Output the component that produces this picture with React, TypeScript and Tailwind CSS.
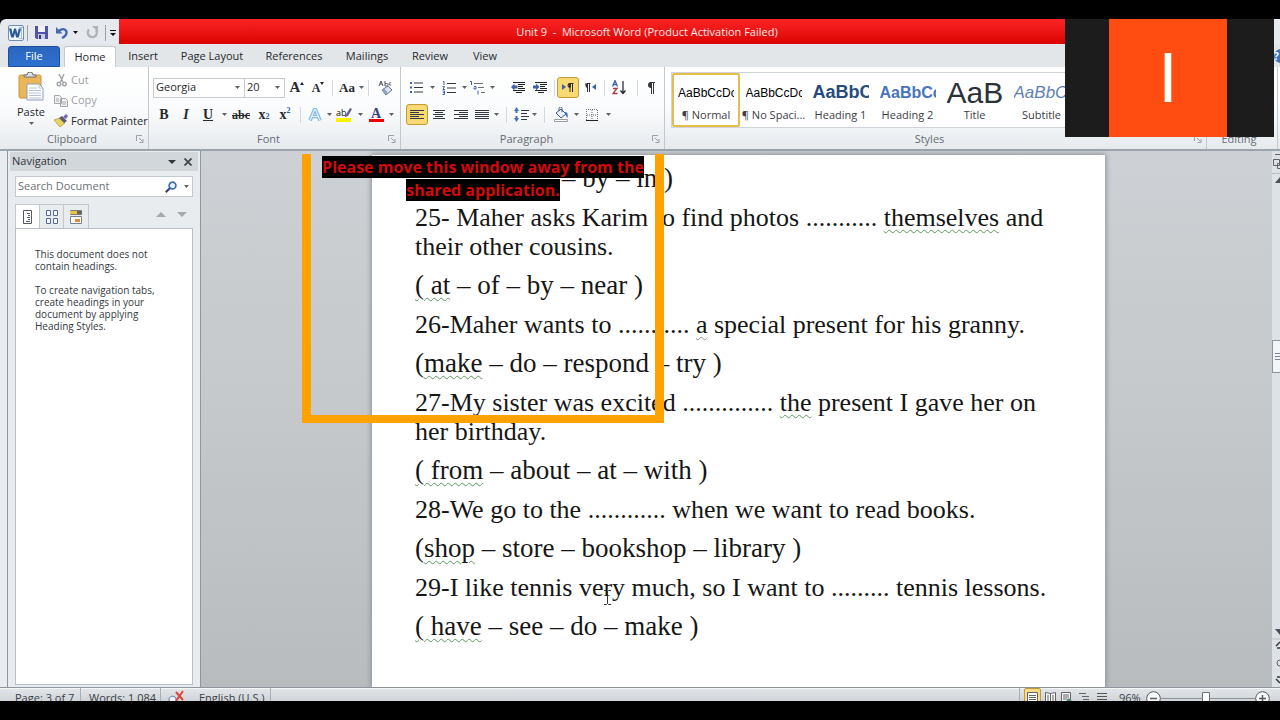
import type { ReactNode } from "react";

type Segment = string | { mark: string; grey?: boolean };

type Paragraph = { kind: "question" | "choices"; parts: Segment[] };

const paragraphs: Paragraph[] = [
  {
    kind: "question",
    parts: ["25- Maher asks Karim to find photos ........... ", { mark: "themselves" }, " and\ntheir other cousins."],
  },
  { kind: "choices", parts: [{ mark: "( at" }, " – of – by – near )"] },
  {
    kind: "question",
    parts: ["26-Maher wants to ........... ", { mark: "a", grey: true }, " special present for his granny."],
  },
  { kind: "choices", parts: ["(", { mark: "make" }, " – do – respond – try )"] },
  {
    kind: "question",
    parts: ["27-My sister was excited .............. ", { mark: "the" }, " present I gave her on\nher birthday."],
  },
  { kind: "choices", parts: [{ mark: "( from" }, " – about – at – with )"] },
  { kind: "question", parts: ["28-We go to the ............ when we want to read books."] },
  { kind: "choices", parts: ["(", { mark: "shop" }, " – store – bookshop – library )"] },
  { kind: "question", parts: ["29-I like tennis very much, so I want to ......... tennis lessons."] },
  { kind: "choices", parts: [{ mark: "( have" }, " – see – do – make )"] },
];

const tabs = [
  { name: "Insert", width: "w-[54px]" },
  { name: "Page Layout", width: "w-[84px]" },
  { name: "References", width: "w-[80px]" },
  { name: "Mailings", width: "w-[66px]" },
  { name: "Review", width: "w-[60px]" },
  { name: "View", width: "w-[50px]" },
];

const styles = [
  { name: "¶ Normal", sample: "AaBbCcDc", look: "text-[12px] text-black" },
  { name: "¶ No Spaci...", sample: "AaBbCcDc", look: "text-[12px] text-black" },
  { name: "Heading 1", sample: "AaBbC", look: "text-[18px] font-bold text-[#274b7c]" },
  { name: "Heading 2", sample: "AaBbCc", look: "text-[16px] font-bold text-[#4a73bb]" },
  { name: "Title", sample: "AaB", look: "text-[30px] text-[#2b3138]" },
  { name: "Subtitle", sample: "AaBbC", look: "text-[17px] italic text-[#5f7fb8]" },
];

function Caret({ className = "w-[10px]" }: { className?: string }) {
  return (
    <span className={`flex shrink-0 items-center justify-center ${className}`}>
      <svg width="5" height="3" viewBox="0 0 5 3" aria-hidden="true">
        <path d="M0 0h5L2.5 3z" fill="#5d6266" />
      </svg>
    </span>
  );
}

function Sep({ className = "w-[8px]" }: { className?: string }) {
  return (
    <span className={`flex shrink-0 justify-center ${className}`}>
      <span className="h-4 w-px bg-[#d5d8dc]" />
    </span>
  );
}

function Tool({
  label,
  className = "w-[22px]",
  active = false,
  children,
}: {
  label: string;
  className?: string;
  active?: boolean;
  children: ReactNode;
}) {
  return (
    <button
      type="button"
      aria-label={label}
      className={`flex h-[21px] shrink-0 items-center justify-center ${className} ${
        active ? "rounded-[3px] border border-[#c29b35] bg-[#f8d973]" : ""
      }`}
    >
      {children}
    </button>
  );
}

function Group({ title, className, launcher = true, children }: { title: string; className: string; launcher?: boolean; children: ReactNode }) {
  return (
    <section aria-label={title} className={`flex flex-col border-r border-[#c3c8ce] ${className}`}>
      <div className="flex-1">{children}</div>
      <div className="flex h-[18px] items-start">
        <span className="flex-1 text-center text-[11px] leading-4 text-[#666b71]">{title}</span>
        <span className="flex w-3 pt-1">
          {launcher && (
            <svg width="8" height="8" viewBox="0 0 8 8" fill="none" stroke="#9aa0a6" aria-hidden="true">
              <path d="M.5 6V.5H6M3 3l3.500 3.500M7 4v3.500H3.500" />
            </svg>
          )}
        </span>
      </div>
    </section>
  );
}

function Lines({ rows }: { rows: [number, number][] }) {
  return (
    <svg width="14" height="12" viewBox="0 0 14 12" stroke="#33383e" aria-hidden="true">
      {rows.map(([a, b], i) => (
        <path key={i} d={`M${a} ${i * 2 + 1.5}H${b}`} />
      ))}
    </svg>
  );
}

function IndentIcon({ flip = false }: { flip?: boolean }) {
  return (
    <svg width="15" height="13" viewBox="0 0 15 13" fill="none" aria-hidden="true">
      <path d="M2 1.500h12M7 3.500h7M7 5.500h5M7 7.500h7M2 9.500h12M5 11.500h6" stroke="#1f2327" />
      <path d={flip ? "M0 4.500h3V2.500l3.500 3.500L3 9.500v-2H0z" : "M6.500 4.500h-3v-2L0 6l3.500 3.500v-2h3z"} fill="#4360a8" />
    </svg>
  );
}

function QuickAccess() {
  return (
    <div className="flex w-[119px] items-center rounded-tl-md bg-[#e6eaee] pt-[2px] pl-2">
      <svg width="16" height="16" viewBox="0 0 16 16" aria-hidden="true">
        <rect x=".5" y=".5" width="15" height="15" rx="1.500" fill="#eef4fa" stroke="#6d8fb5" />
        <path d="M13.500 2v12M11 2.500h4M11 13.500h4" stroke="#a9c0da" />
        <path d="M1 3.500l2.200 9h2.600L7 8l1.200 4.500h2.600l2.200-9h-2.300L9.500 9 8 3.500H6L4.600 9 3.400 3.500z" fill="#2a5a9c" />
      </svg>
      <span className="ml-[3px] h-4 w-px bg-[#9aa0a7]" />
      <button type="button" aria-label="Save" className="ml-[7px]">
        <svg width="13" height="13" viewBox="0 0 13 13" aria-hidden="true">
          <path d="M0 0h13v13H1.500L0 11.500z" fill="#5153a8" />
          <path d="M3 0h7v6H3z" fill="#eef0fa" />
          <path d="M3 8h7v5H3z" fill="#c9cdea" />
          <path d="M4 9h2v4H4z" fill="#34367d" />
        </svg>
      </button>
      <button type="button" aria-label="Undo" className="ml-[8px] flex items-center">
        <svg width="12" height="13" viewBox="0 0 12 13" fill="none" aria-hidden="true">
          <path d="M3 5c4-3.500 7.500-1.500 7.500 1.500S8 11 6 12" stroke="#4667b5" strokeWidth="2.400" />
          <path d="M0 1v6.500h6.500z" fill="#4667b5" />
        </svg>
        <svg width="5" height="3" viewBox="0 0 5 3" className="ml-[5px]" aria-hidden="true">
          <path d="M0 0h5L2.500 3z" fill="#111" />
        </svg>
      </button>
      <button type="button" aria-label="Repeat" className="ml-[8px]">
        <svg width="13" height="13" viewBox="0 0 13 13" fill="none" aria-hidden="true">
          <path d="M3 3.500a4.500 4.500 0 1 0 7 .5" stroke="#b0b3b6" strokeWidth="2.400" />
          <path d="M6 0h6v6z" fill="#b0b3b6" />
        </svg>
      </button>
      <span className="ml-[6px] h-4 w-px bg-[#9aa0a7]" />
      <button type="button" aria-label="Customize Quick Access Toolbar" className="ml-[4px]">
        <svg width="6" height="6" viewBox="0 0 6 6" aria-hidden="true">
          <path d="M0 0h6v1H0zM0 3h6L3 6z" fill="#111" />
        </svg>
      </button>
    </div>
  );
}

function ClipboardGroup() {
  return (
    <Group title="Clipboard" className="w-[141px]">
      <div className="flex">
        <button type="button" className="flex w-[46px] shrink-0 flex-col items-center pt-[5px] text-[11px] leading-4">
          <svg width="26" height="29" viewBox="0 0 26 29" aria-hidden="true">
            <rect x="1" y="3" width="22" height="23" rx="1.500" fill="#eab657" stroke="#c8953a" />
            <path d="M6 5V3h3a3 3 0 0 1 6 0h3v2z" fill="#dfe1e4" stroke="#6c7177" />
            <path d="M9 12h12l4 4v12H9z" fill="#fff" stroke="#8c9db8" />
            <path d="M21 12v4h4M11 16h8M11 18.500h12M11 21h12M11 23.500h12M11 26h12" fill="none" stroke="#b3c2da" />
          </svg>
          <span className="mt-[3px]">Paste</span>
          <Caret className="h-[6px] w-[10px]" />
        </button>
        <div className="flex flex-col pt-[3px] text-[11px] whitespace-nowrap">
          <button type="button" disabled className="flex h-5 items-center pl-[2px] text-[#9c9fa3]">
            <svg width="12" height="13" viewBox="0 0 12 13" fill="none" stroke="#a4a7aa" strokeWidth="1.500" className="mr-[3px]" aria-hidden="true">
              <path d="M3 0l4 8M8 0L4.500 8" />
              <circle cx="3" cy="10" r="1.800" />
              <circle cx="8.500" cy="10" r="1.800" />
            </svg>
            Cut
          </button>
          <button type="button" disabled className="flex h-[21px] items-center text-[#9c9fa3]">
            <svg width="14" height="12" viewBox="0 0 14 12" fill="#f3f3f3" stroke="#a4a7aa" className="mr-[3px]" aria-hidden="true">
              <path d="M.5.500h5l2 2v6h-7zM6.500 3.500h5l2 2v6h-7z" />
              <path d="M2 4h3M2 6h3M8 7h4M8 9h4" />
            </svg>
            Copy
          </button>
          <button type="button" className="flex h-5 items-center">
            <svg width="15" height="14" viewBox="0 0 15 14" className="mr-[2px]" aria-hidden="true">
              <path d="M0 6l6-2 5 5-5 4z" fill="#e9d45e" stroke="#a8943d" strokeWidth=".7" />
              <path d="M5 4l3-2 5 5-3 2z" fill="#5c5a72" />
              <path d="M9 3l3-3 2 2-2 3z" fill="#776aa8" />
            </svg>
            Format Painter
          </button>
        </div>
      </div>
    </Group>
  );
}

function FontGroup() {
  return (
    <Group title="Font" className="w-[252px]">
      <div className="flex flex-col gap-[6px] pt-[10px] pl-[4px]">
        <div className="flex h-[21px] items-center">
          <div className="flex h-5 w-[92px] items-center border border-[#c8ccd1] bg-white">
            <select aria-label="Font" className="h-full w-[78px] appearance-none pl-[2px] text-[11px] outline-none">
              <option>Georgia</option>
            </select>
            <Caret />
          </div>
          <div className="flex h-5 w-[40px] items-center border border-l-0 border-[#c8ccd1] bg-white">
            <select aria-label="Font size" className="h-full w-[27px] appearance-none pl-[2px] text-[11px] outline-none">
              <option>20</option>
            </select>
            <Caret />
          </div>
          <Tool label="Grow font" className="w-[24px]">
            <span className="font-['Liberation_Serif',serif] text-[15px] font-bold">A</span>
            <svg width="4" height="3" viewBox="0 0 4 3" className="mb-2"><path d="M0 3h4L2 0z" fill="#222" /></svg>
          </Tool>
          <Tool label="Shrink font" className="w-[18px]">
            <span className="font-['Liberation_Serif',serif] text-[12px] font-bold">A</span>
            <svg width="4" height="3" viewBox="0 0 4 3" className="mb-2"><path d="M0 0h4L2 3z" fill="#222" /></svg>
          </Tool>
          <Sep className="w-[10px]" />
          <Tool label="Change case" className="w-[20px]">
            <span className="font-['Liberation_Serif',serif] text-[13px] font-bold">Aa</span>
          </Tool>
          <Caret className="w-[8px]" />
          <Sep className="w-[6px]" />
          <Tool label="Clear formatting" className="w-[28px]">
            <svg width="15" height="15" viewBox="0 0 15 15" aria-hidden="true">
              <path d="M1 6l2-5 2 5M2 4h2M7 1v5h1.500c2 0 2-2.500 0-2.500H7M13 3c-2-2-3 3 0 2" fill="none" stroke="#53575d" />
              <path d="M4 10l6-4 4 4-6 5z" fill="#dfe4f2" stroke="#66769c" />
              <path d="M4 10l3.500 4.500L10 13 6 8.600z" fill="#8e9fc8" />
            </svg>
          </Tool>
        </div>
        <div className="flex h-[21px] items-center font-['Liberation_Serif',serif] text-[14px]">
          <Tool label="Bold"><b>B</b></Tool>
          <Tool label="Italic"><i className="font-bold">I</i></Tool>
          <Tool label="Underline"><span className="font-bold underline">U</span></Tool>
          <Caret />
          <Tool label="Strikethrough" className="w-[24px]"><span className="text-[12px] font-bold line-through">abc</span></Tool>
          <Tool label="Subscript"><b>x</b><sub className="text-[8px] font-bold text-[#3558a8]">2</sub></Tool>
          <Tool label="Superscript" className="w-[20px]"><b>x</b><sup className="text-[8px] font-bold text-[#3558a8]">2</sup></Tool>
          <Sep className="w-[10px]" />
          <Tool label="Text effects" className="w-[20px]">
            <svg width="14" height="14" viewBox="0 0 14 14" fill="none" aria-hidden="true">
              <path d="M2 12.500L6.500 1.500h1L12 12.500M4 8.500h6" stroke="#86bce4" strokeWidth="3.600" />
              <path d="M2 12.500L6.500 1.500h1L12 12.500M4 8.500h6" stroke="#e6f3fd" strokeWidth="1.200" />
            </svg>
          </Tool>
          <Caret className="w-[8px]" />
          <Tool label="Text highlight color">
            <svg width="16" height="15" viewBox="0 0 16 15" aria-hidden="true">
              <text x="0" y="9" fontSize="9" fontFamily="Open Sans, sans-serif" fill="#111">ab</text>
              <path d="M9 9l5-8 2 1-4 7-3 1z" fill="#66628f" />
              <path d="M0 11h15v4H0z" fill="#fff200" />
            </svg>
          </Tool>
          <Caret />
          <Tool label="Font color" className="w-[22px]">
            <span className="flex flex-col items-center">
              <span className="h-[12px] text-[14px] leading-[13px] font-bold text-[#38407e]">A</span>
              <span className="h-[3px] w-[15px] bg-[#f00000]" />
            </span>
          </Tool>
          <Caret className="w-[8px]" />
        </div>
      </div>
    </Group>
  );
}

function ParagraphGroup() {
  return (
    <Group title="Paragraph" className="w-[264px]">
      <div className="flex flex-col gap-[6px] pt-[10px] pl-[5px]">
        <div className="flex h-[21px] items-center">
          <Tool label="Bullets" className="w-[20px]">
            <svg width="13" height="13" viewBox="0 0 13 13" aria-hidden="true">
              <path d="M0 1h2v2H0zM0 5.500h2v2H0zM0 10h2v2H0z" fill="#3f5fae" />
              <path d="M4 2h9M4 6.500h9M4 11h9" stroke="#33383e" />
            </svg>
          </Tool>
          <Caret className="w-[12px]" />
          <Tool label="Numbering">
            <svg width="14" height="14" viewBox="0 0 14 14" fill="none" aria-hidden="true">
              <path d="M1 .500h1V4M.5 5.500h2L1 8.500h2M.5 10h2v3.500h-2M1 11.700h1.500" stroke="#3f5fae" />
              <path d="M5 2.500h9M5 7h9M5 11.500h9" stroke="#33383e" />
            </svg>
          </Tool>
          <Caret className="w-[8px]" />
          <Tool label="Multilevel list" className="w-[20px]">
            <svg width="16" height="14" viewBox="0 0 16 14" fill="none" aria-hidden="true">
              <path d="M0 .500h1.500V4M4 5.500h2V8H4V6.500M8 9.500v4" stroke="#3f5fae" />
              <path d="M4 2.500h9M8 6.500h6M11 11.500h4" stroke="#6b7077" />
            </svg>
          </Tool>
          <Caret className="w-[8px]" />
          <span className="w-[11px]" />
          <Tool label="Decrease indent"><IndentIcon /></Tool>
          <Tool label="Increase indent"><IndentIcon flip /></Tool>
          <Sep className="w-[6px]" />
          <Tool label="Left-to-right text direction" active>
            <svg width="12" height="9" viewBox="0 0 12 9" aria-hidden="true">
              <path d="M0 1l4 3-4 3z" fill="#3f5fae" />
              <path d="M11.500.500H8a2 2 0 0 0 0 4V9M10.500.500V9" fill="none" stroke="#2b2f35" />
              <path d="M6 .500h3v4H7z" fill="#2b2f35" />
            </svg>
          </Tool>
          <Tool label="Right-to-left text direction">
            <svg width="12" height="9" viewBox="0 0 12 9" aria-hidden="true">
              <path d="M12 1L8 4l4 3z" fill="#3f5fae" />
              <path d="M6.500.500H3M3.500.500V9M5.500.500V9" fill="none" stroke="#2b2f35" />
              <path d="M1 .500h3v4H2z" fill="#2b2f35" />
            </svg>
          </Tool>
          <Sep className="w-[6px]" />
          <Tool label="Sort" className="w-[24px]">
            <svg width="14" height="15" viewBox="0 0 14 15" fill="none" aria-hidden="true">
              <path d="M.5 6.500L3 .500l2.500 6M1.500 4.500h3" stroke="#3f5fae" strokeWidth="1.300" />
              <path d="M1 8.500h4l-4 5h4.500" stroke="#a83a44" strokeWidth="1.300" />
              <path d="M11 1v12M8.500 10.500L11 13.500l2.500-3" stroke="#1d2126" strokeWidth="1.200" />
            </svg>
          </Tool>
          <Sep className="w-[12px]" />
          <Tool label="Show formatting marks" className="w-[14px]">
            <svg width="9" height="12" viewBox="0 0 9 12" aria-hidden="true">
              <path d="M9 .500H4M5.500.500V12M7.500.500V12" fill="none" stroke="#33383e" />
              <path d="M5 0v6a3 3 0 0 1 0-6z" fill="#33383e" />
            </svg>
          </Tool>
        </div>
        <div className="flex h-[21px] items-center">
          <Tool label="Align left" active><Lines rows={[[0, 14], [0, 9], [0, 14], [0, 9], [0, 14]]} /></Tool>
          <Tool label="Center"><Lines rows={[[1, 13], [3, 11], [1, 13], [3, 11], [1, 13]]} /></Tool>
          <Tool label="Align right"><Lines rows={[[0, 14], [5, 14], [0, 14], [5, 14], [0, 14]]} /></Tool>
          <Tool label="Justify" className="w-[20px]"><Lines rows={[[0, 14], [0, 14], [0, 14], [0, 14], [0, 14]]} /></Tool>
          <Caret className="w-[8px]" />
          <Sep className="w-[12px]" />
          <Tool label="Line spacing" className="w-[18px]">
            <svg width="15" height="15" viewBox="0 0 15 15" aria-hidden="true">
              <path d="M0 4l2.500-4L5 4H3.500v2h-2V4zM0 11l2.500 4L5 11H3.500V9h-2v2z" fill="#3f6fb8" />
              <path d="M7 3.500h8M7 6.500h6M7 9.500h8M7 12.500h6" stroke="#33383e" />
            </svg>
          </Tool>
          <Caret className="w-[8px]" />
          <Sep className="w-[12px]" />
          <Tool label="Shading">
            <svg width="15" height="15" viewBox="0 0 15 15" aria-hidden="true">
              <path d="M2 6l5-4 5 5-5 4z" fill="#e9eefa" stroke="#495c86" />
              <path d="M5 4V1.500a1.500 1.500 0 0 1 3 0V5" fill="none" stroke="#495c86" />
              <path d="M11 5c3 0 3 3 2.500 6-1.500-1-1-3-2.500-3z" fill="#3f6fb8" />
              <path d="M.5 12.500h13v2H.5z" fill="#fff" stroke="#9a9ea4" />
            </svg>
          </Tool>
          <Caret className="w-[8px]" />
          <Tool label="Borders" className="w-[24px]">
            <svg width="12" height="12" viewBox="0 0 12 12" fill="none" stroke="#70757b" aria-hidden="true">
              <path d="M.5 11V.500h11V11M6 1v10M1 6h10" strokeDasharray="1 1" />
              <path d="M0 11.500h12" stroke="#1d2126" />
            </svg>
          </Tool>
          <Caret className="w-[8px]" />
        </div>
      </div>
    </Group>
  );
}

function StylesGroup() {
  return (
    <Group title="Styles" className="min-w-0 flex-1">
      <div className="mt-[5px] ml-[6px] flex h-[56px] overflow-hidden border border-[#cfd4da] bg-white">
        {styles.map((s, i) => (
          <button
            key={s.name}
            type="button"
            className={`flex h-[54px] shrink-0 flex-col items-center ${
              i === 0 ? "w-[68px] rounded-[2px] border-2 border-[#e3bd4e] bg-white pt-[3px]" : "w-[67px] pt-[5px]"
            }`}
          >
            <span
              className={`flex h-[29px] w-[56px] items-center overflow-hidden font-['Liberation_Sans',sans-serif] whitespace-nowrap ${s.look}`}
            >
              {s.sample}
            </span>
            <span className="text-[11px] leading-4 whitespace-nowrap text-[#3b4046]">{s.name}</span>
          </button>
        ))}
      </div>
    </Group>
  );
}

function NavigationPane() {
  return (
    <aside className="flex w-[194px] shrink-0 flex-col border-r border-l border-[#8f969e] bg-[#e9ecef] px-[7px] pb-[2px]">
      <div className="-mx-[5px] mt-px flex h-[19px] shrink-0 items-center bg-[#d2d7dc] pr-[6px] pl-[2px]">
        <h2 className="flex-1 text-[11px] text-[#2f3439]">Navigation</h2>
        <button type="button" aria-label="Pane options" className="mr-[8px]">
          <svg width="8" height="4" viewBox="0 0 8 4"><path d="M0 0h8L4 4z" fill="#2f3439" /></svg>
        </button>
        <button type="button" aria-label="Close pane">
          <svg width="8" height="8" viewBox="0 0 8 8"><path d="M.5.500l7 7M7.500.500l-7 7" stroke="#42474d" strokeWidth="1.800" /></svg>
        </button>
      </div>
      <div className="mt-[5px] flex h-[21px] shrink-0 items-center border border-[#c3c8ce] bg-white">
        <input
          type="search"
          aria-label="Search Document"
          placeholder="Search Document"
          className="w-0 flex-1 pl-[2px] text-[11px] outline-none placeholder:text-[#6d7278]"
        />
        <svg width="12" height="12" viewBox="0 0 12 12" fill="none" aria-hidden="true">
          <path d="M5 7L.8 11.200" stroke="#35406e" strokeWidth="2" />
          <circle cx="7.500" cy="4.500" r="3.400" fill="#eaf3fc" stroke="#3c6fb8" strokeWidth="1.700" />
        </svg>
        <Caret className="mr-[1px] ml-[4px] w-[10px]" />
      </div>
      <div className="mt-[7px] flex h-6 shrink-0 items-stretch">
        <button type="button" aria-label="Browse headings" className="-mb-px flex w-[25px] items-center justify-center border border-b-0 border-[#c3c8ce] bg-white">
          <svg width="9" height="14" viewBox="0 0 9 14" fill="none" stroke="#555a60"><path d="M.5.500h8v13h-8zM4 3.500h3M5 5.500h2M4 7.500h3M5 9.500h2M3 11.500h4" /></svg>
        </button>
        <button type="button" aria-label="Browse pages" className="flex w-[24px] items-center justify-center border-t border-r border-[#c3c8ce]">
          <svg width="12" height="14" viewBox="0 0 12 14" fill="#f4f6fb" stroke="#5a6a94"><path d="M.5.500h4v5h-4zM7.500.500h4v5h-4zM.5 8.500h4v5h-4zM7.500 8.500h4v5h-4z" /></svg>
        </button>
        <button type="button" aria-label="Browse results" className="flex w-[25px] items-center justify-center border-t border-r border-[#c3c8ce]">
          <svg width="12" height="14" viewBox="0 0 12 14">
            <path d="M.5.500h11v4H.5zM.5 6.500h11v7H.5z" fill="#fbfbfb" stroke="#7b7f85" />
            <path d="M0 1h7v3H0z" fill="#eec23c" />
            <path d="M7 1h5v3H7z" fill="#6a675b" />
            <path d="M5 9h5v3H5z" fill="#e58b35" />
          </svg>
        </button>
        <div className="flex flex-1 items-center justify-end gap-[11px] pr-[6px] pb-[4px]">
          <button type="button" aria-label="Previous"><svg width="10" height="5" viewBox="0 0 10 5"><path d="M0 5h10L5 0z" fill="#a5a9ad" /></svg></button>
          <button type="button" aria-label="Next"><svg width="10" height="5" viewBox="0 0 10 5"><path d="M0 0h10L5 5z" fill="#a5a9ad" /></svg></button>
        </div>
      </div>
      <div className="flex-1 border border-[#b9bfc6] bg-white px-[19px] pt-[19px] text-[10px] leading-[12px] text-[#33383d]">
        <p>This document does not<br />contain headings.</p>
        <p className="mt-3 whitespace-nowrap">
          To create navigation tabs,<br />create headings in your<br />document by applying<br />Heading Styles.
        </p>
      </div>
    </aside>
  );
}

function DocumentPage() {
  return (
    <article className="w-[733px] overflow-hidden bg-white pt-[9px] pl-[43px] font-['Liberation_Serif',serif] leading-[29px] whitespace-pre text-[#161616] shadow-[0_0_5px_1px_#8b9093]">
      <p className="mb-[10px] pl-[147px] text-[27px]">– by – in )</p>
      {paragraphs.map(({ kind, parts }, i) => (
        <p key={i} className={`mb-[10px] ${kind === "question" ? "text-[26px]" : "text-[27px]"}`}>
          {parts.map((s, j) =>
            typeof s === "string" ? (
              s
            ) : (
              <span
                key={j}
                className={`underline decoration-wavy decoration-1 underline-offset-[3px] ${
                  s.grey ? "decoration-[#8a9a94]" : "decoration-[#5b9a5b]"
                }`}
              >
                {s.mark}
              </span>
            ),
          )}
        </p>
      ))}
    </article>
  );
}

function ScrollBar() {
  return (
    <div className="flex w-[8px] shrink-0 flex-col overflow-hidden bg-[#dde2e6] pt-[3px]">
      <svg width="8" height="30" viewBox="0 0 8 30" fill="none" className="shrink-0" aria-hidden="true">
        <path d="M3 .500h5M1.500 5.500h6v6h-6zM5.500 9.500h4v5h-4z" stroke="#5e6369" />
        <path d="M0 19.500h8" stroke="#b9bec4" />
        <path d="M3 29l5-6v6z" fill="#4b5056" />
      </svg>
      <div className="mt-[156px] flex h-[33px] shrink-0 items-center border border-r-0 border-[#8d959e] bg-[#f3f6f9] pl-[2px]">
        <svg width="5" height="7" viewBox="0 0 5 7" stroke="#7b828a"><path d="M0 .500h5M0 3.500h5M0 6.500h5" /></svg>
      </div>
      <svg width="8" height="60" viewBox="0 0 8 60" fill="none" className="mt-auto" aria-hidden="true">
        <path d="M3 2h5v6z" fill="#4b5056" />
        <path d="M0 12h8" stroke="#b9bec4" />
        <path d="M4 19l4-4M5 21h3M5 50h3M4 52l4 4" stroke="#33383e" strokeWidth="1.500" />
        <circle cx="8" cy="36" r="3" stroke="#60656b" />
      </svg>
    </div>
  );
}

function StatusBar() {
  return (
    <footer className="h-[13px] shrink-0 overflow-hidden bg-[#d9dde1] text-[11px] text-[#3a3f45]">
      <div className="flex h-[19px] items-center border-t border-[#f4f6f8] bg-linear-to-b from-[#e2e5e8] to-[#c6cbd0] pl-[15px]">
        <span className="w-[66px] border-r border-[#a9afb5] leading-5 whitespace-nowrap">Page: 3 of 7</span>
        <span className="w-[80px] border-r border-[#a9afb5] pl-[8px] leading-5 whitespace-nowrap">Words: 1 084</span>
        <svg width="17" height="16" viewBox="0 0 17 16" fill="none" className="mx-[7px]" aria-hidden="true">
          <path d="M1 10c0-4 4-5 7-2v6H3z" fill="#eef1f8" stroke="#5e6fa0" />
          <path d="M8 2l7 8M15 1L8 11" stroke="#e0433d" strokeWidth="2" />
        </svg>
        <span className="w-[79px] border-r border-[#a9afb5] pl-[7px] leading-5 whitespace-nowrap">English (U.S.)</span>
        <span className="flex-1" />
        <span className="h-5 w-px bg-[#a9afb5]" />
        <button type="button" aria-label="Print Layout" className="ml-[4px] flex h-5 w-[17px] items-center justify-center rounded-[2px] border border-[#bf9a3c] bg-[#f7dc80]">
          <svg width="11" height="13" viewBox="0 0 11 13"><path d="M.5.500h10v12H.5z" fill="#fff" stroke="#666" /><path d="M2 3.500h7M2 5.500h7M2 7.500h7M2 9.500h7" stroke="#666" /></svg>
        </button>
        <button type="button" aria-label="Full Screen Reading" className="ml-[4px]">
          <svg width="11" height="13" viewBox="0 0 11 13" fill="#f5f5f5" stroke="#666"><path d="M.5.500l5 1 5-1v12H.5zM5.500 1.500v11M2 4h2M2 6h2M7 4h2M7 6h2M2 8h2M7 8h2" /></svg>
        </button>
        <button type="button" aria-label="Web Layout" className="ml-[5px]">
          <svg width="11" height="13" viewBox="0 0 11 13" fill="#f5f5f5" stroke="#666"><path d="M.5.500h9v12h-9zM2 3h6M2 5h6M2 7h4" /><circle cx="8" cy="9" r="2.500" fill="#4f8a78" stroke="none" /></svg>
        </button>
        <button type="button" aria-label="Outline" className="ml-[7px]">
          <svg width="10" height="13" viewBox="0 0 10 13" stroke="#666"><path d="M0 1.500h7M3 4.500h7M4 7.500h6M3 10.500h7" /></svg>
        </button>
        <button type="button" aria-label="Draft" className="ml-[8px]">
          <svg width="10" height="13" viewBox="0 0 10 13" stroke="#555"><path d="M0 1.500h10M0 4.500h10M0 7.500h10M0 10.500h10" /></svg>
        </button>
        <span className="ml-[12px] w-[27px] text-[11px]">96%</span>
        <button type="button" aria-label="Zoom out" className="shrink-0">
          <svg width="15" height="15" viewBox="0 0 15 15" fill="#fafafa" stroke="#555a60"><circle cx="7.500" cy="7.500" r="6.800" /><path d="M4 7.500h7" strokeWidth="1.500" /></svg>
        </button>
        <input
          type="range"
          aria-label="Zoom"
          min="0"
          max="100"
          defaultValue="48"
          className="h-4 w-[94px] appearance-none bg-transparent [&::-webkit-slider-runnable-track]:h-px [&::-webkit-slider-runnable-track]:bg-[#8b9198] [&::-webkit-slider-thumb]:-mt-[6px] [&::-webkit-slider-thumb]:h-[13px] [&::-webkit-slider-thumb]:w-[8px] [&::-webkit-slider-thumb]:appearance-none [&::-webkit-slider-thumb]:rounded-b-[4px] [&::-webkit-slider-thumb]:border [&::-webkit-slider-thumb]:border-[#6d737a] [&::-webkit-slider-thumb]:bg-white"
        />
        <button type="button" aria-label="Zoom in" className="mr-[10px] shrink-0">
          <svg width="15" height="15" viewBox="0 0 15 15" fill="#fafafa" stroke="#555a60"><circle cx="7.500" cy="7.500" r="6.800" /><path d="M4 7.500h7M7.500 4v7" strokeWidth="1.500" /></svg>
        </button>
      </div>
    </footer>
  );
}

export default function App() {
  return (
    <div className="relative flex h-screen flex-col overflow-hidden bg-black py-[19px] font-['Open_Sans','Noto_Sans',sans-serif] text-[#26292d]">
      <header className="flex h-[25px] shrink-0">
        <QuickAccess />
        <h1 className="flex-1 bg-linear-to-b from-[#fb2222] to-[#dc0000] pr-[99px] text-center text-[11px] leading-[25px] text-[#ffe9e6]">
          Unit 9&nbsp; -&nbsp; Microsoft Word (Product Activation Failed)
        </h1>
        <span className="w-[6px] bg-[#e6eaee]" />
      </header>

      <nav aria-label="Ribbon tabs" className="flex h-[23px] shrink-0 items-end bg-[#e3e6e8] pl-[8px] text-[11px]">
        <button type="button" className="h-[21px] w-[52px] rounded-t-[3px] border border-[#1d4f9f] bg-linear-to-b from-[#2a66bd] to-[#2f70d0] text-white">File</button>
        <button type="button" aria-current="page" className="ml-[4px] h-[21px] w-[52px] rounded-t-[3px] border border-b-0 border-[#c5cad0] bg-white">Home</button>
        {tabs.map((t) => (
          <button key={t.name} type="button" className={`h-[21px] whitespace-nowrap ${t.width}`}>{t.name}</button>
        ))}
        <span className="ml-auto flex h-full w-[6px] items-center overflow-hidden">
          <span className="h-[14px] w-[14px] shrink-0 rounded-full bg-[#3d73c4] text-[10px] leading-[14px] font-bold text-white">?</span>
        </span>
      </nav>

      <div className="flex h-[84px] shrink-0 border-b-2 border-[#9ca3aa] bg-linear-to-b from-white via-[#fbfcfd] to-[#e6eaee] pl-[8px]">
        <ClipboardGroup />
        <FontGroup />
        <ParagraphGroup />
        <StylesGroup />
        <Group title="Editing" className="w-[71px] pl-[6px]" launcher={false}>{null}</Group>
        <span className="w-[2px]" />
      </div>

      <div className="flex min-h-0 flex-1 border-b border-[#8f969e] bg-linear-to-b from-[#cdd1d5] via-[#c4c8ca] to-[#b8bcbe]">
        <span className="w-[7px] shrink-0 bg-[#e9edf1]" />
        <NavigationPane />
        <main className="flex min-w-0 flex-1 justify-center pt-[4px] pl-[4px]">
          <DocumentPage />
        </main>
        <ScrollBar />
      </div>

      <StatusBar />

      <div className="absolute top-[154px] left-[302px] h-[269px] w-[362px] border-x-[9px] border-b-[8px] border-[#ffa200] pt-[2px] text-center text-[16px] leading-[23px] font-bold text-[#d20a0a]">
        <span className="bg-black box-decoration-clone">
          Please move this window away from the<br />shared application.
        </span>
      </div>

      <svg width="7" height="15" viewBox="0 0 7 15" fill="none" stroke="#333" className="absolute top-[590px] left-[604px]" aria-hidden="true">
        <path d="M0 .500h2.500l1 1 1-1H7M3.500 1.500v12M0 14.500h2.500l1-1 1 1H7" />
      </svg>

      <div className="absolute top-[19px] right-[6px] flex h-[118px] w-[209px] bg-[#1c1c1c] pl-[44px]">
        <div className="w-[118px] bg-[#ff4d12] text-center font-['Liberation_Sans',sans-serif] text-[70px] leading-[118px] text-white">I</div>
      </div>
    </div>
  );
}
